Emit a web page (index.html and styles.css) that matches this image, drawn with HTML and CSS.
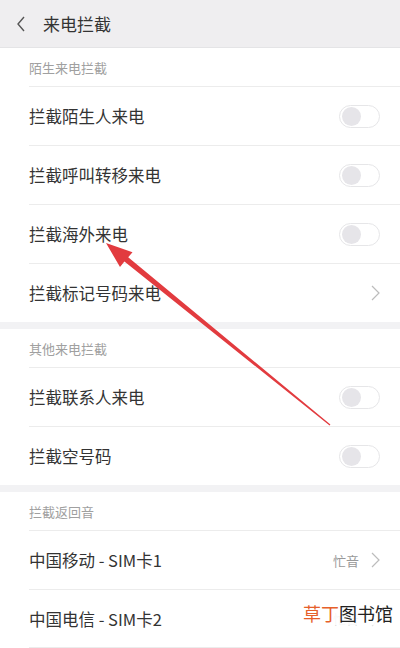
FILE: index.html
```html
<!DOCTYPE html>
<html lang="zh">
<head>
  <meta charset="UTF-8" />
  <meta name="viewport" content="width=device-width, initial-scale=1.0"/>
  <title>来电拦截</title>
  <link rel="stylesheet" href="styles.css">
</head>

<body>
  <header>
    <svg class="back" width="10" height="16" viewBox="0 0 10 16">
      <path d="M8 1 L2 8 L8 15" fill="none" stroke="#555" stroke-width="1.4"/>
    </svg>
    <span class="title">来电拦截</span>
  </header>

  <section class="group">
    <div class="group-title">陌生来电拦截</div>
    <div class="row"><span>拦截陌生人来电</span><i class="switch"></i></div>
    <div class="row"><span>拦截呼叫转移来电</span><i class="switch"></i></div>
    <div class="row"><span>拦截海外来电</span><i class="switch"></i></div>
    <div class="row">
      <span>拦截标记号码来电</span>
      <svg class="chev" width="9" height="16" viewBox="0 0 9 16"><path d="M1 1 L8 8 L1 15" fill="none" stroke="#bcbcbc" stroke-width="1.2"/></svg>
    </div>
  </section>

  <section class="group">
    <div class="group-title">其他来电拦截</div>
    <div class="row"><span>拦截联系人来电</span><i class="switch"></i></div>
    <div class="row"><span>拦截空号码</span><i class="switch"></i></div>
  </section>

  <section class="group last">
    <div class="group-title">拦截返回音</div>
    <div class="row">
      <span>中国移动 - SIM卡1</span>
      <div class="value">忙音<svg class="chev" width="9" height="16" viewBox="0 0 9 16"><path d="M1 1 L8 8 L1 15" fill="none" stroke="#bcbcbc" stroke-width="1.2"/></svg></div>
    </div>
    <div class="row">
      <span>中国电信 - SIM卡2</span>
      <div class="value faded">忙音<svg class="chev" width="9" height="16" viewBox="0 0 9 16"><path d="M1 1 L8 8 L1 15" fill="none" stroke="#bcbcbc" stroke-width="1.2"/></svg></div>
    </div>
  </section>

  <!-- annotation arrow -->
  <svg class="arrow" width="400" height="648" viewBox="0 0 400 648">
    <polygon points="106,243 132.5,252.2 128.2,257.3 330.4,424.5 329.6,425.5 124.4,261.6 120,267" fill="#e23b3f"/>
  </svg>

  <div class="watermark"><em>草丁</em>图书馆</div>
</body>
</html>
```

FILE: styles.css
```css
* {
  margin: 0;
  padding: 0;
  box-sizing: border-box;
  font-family: "Noto Sans CJK SC", "Noto Sans", sans-serif;
}

body {
  background: #f2f2f4;
  color: #333;
  width: 400px;
  height: 648px;
  overflow: hidden;
  position: relative;
}

header {
  height: 48px;
  background: #efeef0;
  border-bottom: 1px solid #e4e4e6;
  display: flex;
  align-items: center;
  padding-left: 16px;
}

.back {
  margin-right: 17px;
}

.title {
  font-size: 17px;
  color: #333;
}

.group {
  background: white;
  margin-bottom: 7px;
}

.group.last {
  margin-bottom: 0;
}

.group-title {
  height: 38px;
  margin-left: 29px;
  display: flex;
  align-items: center;
  font-size: 13px;
  color: #a0a0a0;
}

.row {
  height: 59px;
  margin-left: 29px;
  padding-right: 20px;
  border-top: 1px solid #ececec;
  display: flex;
  align-items: center;
  justify-content: space-between;
  font-size: 16.5px;
  color: #333;
}

.last .row:last-child {
  border-bottom: 1px solid #ececec;
}

.switch {
  width: 41px;
  height: 23px;
  border: 1px solid #e6e6e8;
  border-radius: 12px;
  background: #fff;
  position: relative;
}

.switch::before {
  content: "";
  position: absolute;
  left: 2px;
  top: 1px;
  width: 19px;
  height: 19px;
  border-radius: 50%;
  background: #e6e5e9;
}

.chev {
  display: block;
}

.value {
  display: flex;
  align-items: center;
  gap: 12px;
  font-size: 13px;
  color: #999;
}

.value.faded {
  opacity: 0.4;
}

.arrow {
  position: absolute;
  left: 0;
  top: 0;
}

.watermark {
  position: absolute;
  left: 300px;
  top: 601px;
  padding: 0 3px;
  font-size: 18px;
  line-height: 24px;
  color: #222;
  background: rgba(255, 255, 255, 0.8);
}

.watermark em {
  font-style: normal;
  color: #e6602a;
}
```
